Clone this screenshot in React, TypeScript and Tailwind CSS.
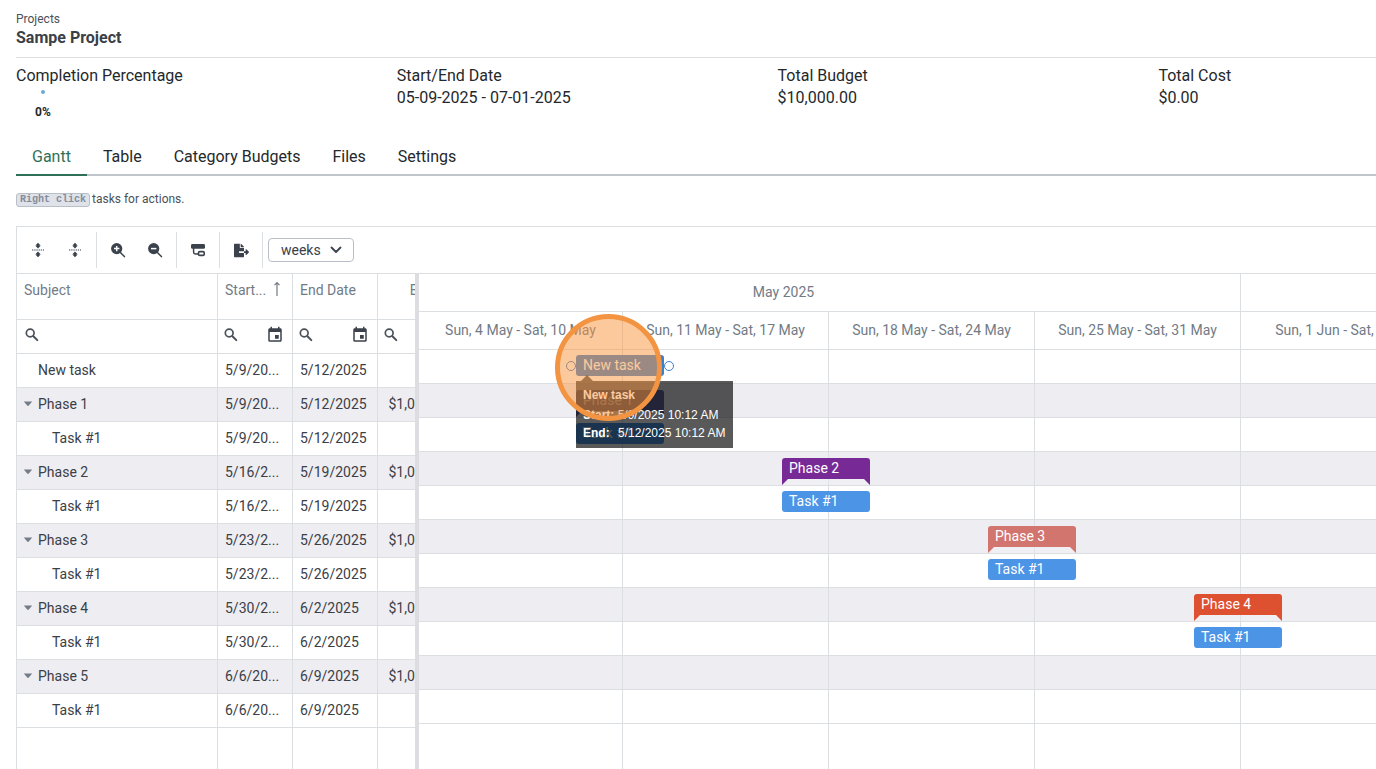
import { useState } from 'react';
import type { ReactNode } from 'react';
import clsx from 'clsx';
import { FaFileExport } from 'react-icons/fa';
import { MdEvent } from 'react-icons/md';

type Row = {
  id: string;
  name: string;
  level: number;
  isPhase?: boolean;
  start: string;
  end: string;
  budget?: string;
  week: number;
  color: string;
};

const TASK_COLOR = 'bg-[#4b94e6]';
const WEEK_WIDTH = 206;
const FIRST_BAR_LEFT = 157;

const rows: Row[] = [
  { id: '0', name: 'New task', level: 1, start: '5/9/20...', end: '5/12/2025', week: 0, color: 'bg-[#3c7fcd]' },
  { id: '1', name: 'Phase 1', level: 1, isPhase: true, start: '5/9/20...', end: '5/12/2025', budget: '$1,000.00', week: 0, color: 'bg-[#66689f] text-[#66689f]' },
  { id: '1.1', name: 'Task #1', level: 2, start: '5/9/20...', end: '5/12/2025', week: 0, color: TASK_COLOR },
  { id: '2', name: 'Phase 2', level: 1, isPhase: true, start: '5/16/2...', end: '5/19/2025', budget: '$1,000.00', week: 1, color: 'bg-[#772a96] text-[#772a96]' },
  { id: '2.1', name: 'Task #1', level: 2, start: '5/16/2...', end: '5/19/2025', week: 1, color: TASK_COLOR },
  { id: '3', name: 'Phase 3', level: 1, isPhase: true, start: '5/23/2...', end: '5/26/2025', budget: '$1,000.00', week: 2, color: 'bg-[#d2756f] text-[#d2756f]' },
  { id: '3.1', name: 'Task #1', level: 2, start: '5/23/2...', end: '5/26/2025', week: 2, color: TASK_COLOR },
  { id: '4', name: 'Phase 4', level: 1, isPhase: true, start: '5/30/2...', end: '6/2/2025', budget: '$1,000.00', week: 3, color: 'bg-[#dd5030] text-[#dd5030]' },
  { id: '4.1', name: 'Task #1', level: 2, start: '5/30/2...', end: '6/2/2025', week: 3, color: TASK_COLOR },
  { id: '5', name: 'Phase 5', level: 1, isPhase: true, start: '6/6/20...', end: '6/9/2025', budget: '$1,000.00', week: 4, color: 'bg-[#2f9e6b] text-[#2f9e6b]' },
  { id: '5.1', name: 'Task #1', level: 2, start: '6/6/20...', end: '6/9/2025', week: 4, color: TASK_COLOR },
];

const weeks = [
  'Sun, 4 May - Sat, 10 May',
  'Sun, 11 May - Sat, 17 May',
  'Sun, 18 May - Sat, 24 May',
  'Sun, 25 May - Sat, 31 May',
  'Sun, 1 Jun - Sat, 7 Jun',
];

const tabs = ['Gantt', 'Table', 'Category Budgets', 'Files', 'Settings'];

const WEEK_GRID = 'grid grid-cols-[204px_206px_206px_206px_206px]';

function ToolButton({ label, children }: { label: string; children: ReactNode }) {
  return (
    <button type="button" aria-label={label} className="flex h-9 w-9 items-center justify-center text-[#3b424c]">
      {children}
    </button>
  );
}

function ToolGroup({ children }: { children: ReactNode }) {
  return <div className="flex gap-px border-r border-[#dcdfe2] px-[3px]">{children}</div>;
}

function RowsIcon() {
  return (
    <svg width="16" height="16" viewBox="0 0 16 16" fill="currentColor">
      <path d="M8 .8l2.6 2.6H9v.4h1.6L8 6.4 5.400 3.8H7v-.4H5.400z" />
      <path d="M8 9.600l2.6 2.6H9v.4h1.6L8 15.200l-2.6-2.6H7v-.4H5.400z" />
      <path d="M2 7.500h1.300v1H2zM4.200 7.500h1.300v1H4.200zM6.400 7.500h1.300v1H6.400zM8.600 7.500h1.300v1H8.600zM10.800 7.500h1.300v1h-1.300zM13 7.500h1v1h-1z" />
    </svg>
  );
}

function ZoomIcon({ plus }: { plus?: boolean }) {
  return (
    <svg width="16" height="16" viewBox="0 0 16 16" fill="none">
      <circle cx="6.7" cy="6.6" r="5.6" fill="currentColor" />
      <path d="M10.4 10.4l4 4.2" stroke="currentColor" strokeWidth="1.5" strokeLinecap="round" />
      <path d={plus ? 'M4 6.6h5.4M6.7 3.9v5.4' : 'M4 6.6h5.4'} stroke="#fff" strokeWidth="1.5" />
    </svg>
  );
}

function SubtaskIcon() {
  return (
    <svg width="16" height="16" viewBox="0 0 16 16" fill="none" stroke="currentColor">
      <rect x="1" y="2" width="14" height="4.8" rx="1.4" fill="currentColor" stroke="none" />
      <path d="M3.6 6v4.2c0 1 .6 1.7 1.7 1.7h3" strokeWidth="1.5" />
      <rect x="8.5" y="9.6" width="5.7" height="3.8" rx="1.2" strokeWidth="1.6" />
    </svg>
  );
}

function SearchIcon() {
  return (
    <svg width="16" height="16" viewBox="0 0 16 16" fill="none" stroke="currentColor" strokeLinecap="round">
      <circle cx="6.2" cy="6" r="3.9" strokeWidth="1.7" />
      <path d="M9.400 9.200l3.900 3.900" strokeWidth="2" />
    </svg>
  );
}

function FilterCell({ id, label, date }: { id: string; label: string; date?: boolean }) {
  return (
    <div className="flex h-[29px] items-center text-[#4a5159]">
      <label htmlFor={id} aria-label={label} className="shrink-0">
        <SearchIcon />
      </label>
      <input id={id} type="text" className="w-0 min-w-0 flex-1 outline-none" />
      {date && (
        <button type="button" aria-label={`Pick ${label}`} className="shrink-0 text-[#3b424c]">
          <MdEvent size={18} />
        </button>
      )}
    </div>
  );
}

function TreeList() {
  return (
    <div className="flex w-[398px] shrink-0 flex-col overflow-hidden">
      <table className="w-[441px] table-fixed border-separate border-spacing-0 text-sm leading-5 text-[#3b4047]">
        <colgroup>
          <col className="w-[201px]" />
          <col className="w-[75px]" />
          <col className="w-[85px]" />
          <col className="w-[80px]" />
        </colgroup>
        <thead>
          <tr className="h-[46px] align-top text-left text-[#727b85] [&>th]:border-r [&>th]:border-b [&>th]:border-[#dcdfe2] [&>th]:pt-[6px] [&>th]:pl-[7px] [&>th]:font-normal">
            <th>Subject</th>
            <th>
              <div className="flex items-start justify-between">
                Start...
                <svg width="8" height="16" viewBox="0 0 8 16" className="mr-[11px] mt-px" fill="none" stroke="currentColor" strokeWidth="1.2">
                  <path d="M4 15V2M1.5 4.2L4 1.6l2.5 2.6" />
                </svg>
              </div>
            </th>
            <th>End Date</th>
            <th className="pr-[3px] text-right">Budget</th>
          </tr>
          <tr className="h-[34px] [&>td]:border-r [&>td]:border-b [&>td]:border-[#dcdfe2] [&>td]:pr-2 [&>td]:pb-[3px] [&>td]:pl-[5px] [&>td:first-child]:pl-[7px]">
            <td>
              <FilterCell id="filter-subject" label="Subject" />
            </td>
            <td>
              <FilterCell id="filter-start" label="Start Date" date />
            </td>
            <td>
              <FilterCell id="filter-end" label="End Date" date />
            </td>
            <td>
              <FilterCell id="filter-budget" label="Budget" />
            </td>
          </tr>
        </thead>
        <tbody>
          {rows.map((row) => (
            <tr
              key={row.id}
              className={clsx(
                'h-[34px] [&>td]:border-r [&>td]:border-b [&>td]:border-[#dcdfe2] [&>td]:px-[7px] [&>td]:pb-[2px]',
                row.isPhase && 'bg-[#eeedf2]',
              )}
            >
              <td>
                <div className={clsx('flex items-center', row.level === 2 ? 'pl-7' : !row.isPhase && 'pl-[14px]')}>
                  {row.isPhase && (
                    <button type="button" aria-label={`Collapse ${row.name}`} className="w-[14px]">
                      <svg width="8" height="5" viewBox="0 0 8 5" fill="#747d87">
                        <path d="M.4.4h7.2c.4 0 .5.4.2.7L4.8 4.5c-.5.5-1.1.5-1.6 0L.2 1.1C-.1.8 0 .4.4.4z" />
                      </svg>
                    </button>
                  )}
                  {row.name}
                </div>
              </td>
              <td>{row.start}</td>
              <td>{row.end}</td>
              <td className="text-right">{row.budget}</td>
            </tr>
          ))}
        </tbody>
      </table>
      <div className="grid min-h-0 w-[441px] flex-1 grid-cols-[201px_75px_85px_80px] [&>div]:border-r [&>div]:border-[#dcdfe2]">
        <div />
        <div />
        <div />
        <div />
      </div>
    </div>
  );
}

function TaskBar({ row }: { row: Row }) {
  const left = FIRST_BAR_LEFT + row.week * WEEK_WIDTH;
  if (row.isPhase) {
    return (
      <div className={clsx('absolute top-[6px] h-[21px] w-[88px] rounded-t-[3px] px-[7px] text-sm leading-5', row.color)} style={{ left }}>
        <span className="text-white">{row.name}</span>
        <svg className="absolute top-full left-0" width="88" height="6" viewBox="0 0 88 6">
          <path d="M0 0h88v6H0z" fill="#fff" fillOpacity=".15" />
          <path d="M0 0h6L0 6zM88 0h-6l6 6z" fill="currentColor" />
        </svg>
      </div>
    );
  }
  return (
    <div className={clsx('absolute top-[5px] h-[21px] w-[88px] rounded-[3px] px-[7px] text-sm leading-5 text-white', row.color)} style={{ left }}>
      {row.name}
    </div>
  );
}

function TaskTooltip() {
  return (
    <div
      role="tooltip"
      className="absolute top-[31px] left-[157px] z-10 w-[157px] bg-black/65 px-[7px] pt-[5px] pb-[6px] font-['Liberation_Sans',Arial,sans-serif] text-xs whitespace-nowrap text-white"
    >
      <div className="absolute -top-[6px] left-[5px] border-x-6 border-b-6 border-x-transparent border-b-black/65" />
      <div className="leading-[18px] font-bold">New task</div>
      <div className="mt-[2px] leading-[18px]">
        <b>Start:</b> 5/9/2025 10:12 AM
      </div>
      <div className="leading-[18px]">
        <b className="mr-[5px]">End:</b> 5/12/2025 10:12 AM
      </div>
    </div>
  );
}

function Timeline() {
  return (
    <div className="flex min-w-0 flex-1 flex-col overflow-hidden text-sm text-[#727b85]">
      <div className="grid h-[38px] shrink-0 grid-cols-[822px_206px] border-b border-[#dcdfe2]">
        <div className="flex items-center justify-center border-r border-[#dcdfe2] pr-[92px] pb-[2px]">May 2025</div>
        <div />
      </div>
      <div className={clsx(WEEK_GRID, 'h-[38px] shrink-0')}>
        {weeks.map((week) => (
          <div key={week} className="flex items-center justify-center border-r border-b border-[#dcdfe2] pb-[2px] whitespace-nowrap">
            {week}
          </div>
        ))}
      </div>
      {rows.map((row, i) => (
        <div key={row.id} className={clsx(WEEK_GRID, 'relative h-[34px] shrink-0', row.isPhase && 'bg-[#eeedf2]')}>
          {weeks.map((week) => (
            <div key={week} className="border-r border-b border-[#dcdfe2]" />
          ))}
          <TaskBar row={row} />
          {i === 0 && (
            <>
              <div className="absolute top-[11px] left-[147px] size-[10px] rounded-full border border-[#3c7fcd]" />
              <div className="absolute top-[11px] left-[245px] size-[10px] rounded-full border border-[#3c7fcd] bg-white" />
              <TaskTooltip />
              {/* click highlight */}
              <div className="absolute -top-9 left-[136px] z-20 size-[107px] rounded-full border-[5px] border-[#f29441] bg-[#fa943c]/50" />
            </>
          )}
        </div>
      ))}
      <div className={clsx(WEEK_GRID, 'min-h-0 flex-1')}>
        {weeks.map((week) => (
          <div key={week} className="border-r border-[#dcdfe2]" />
        ))}
      </div>
    </div>
  );
}

export default function App() {
  const [tab, setTab] = useState('Gantt');
  const [scale, setScale] = useState('weeks');

  return (
    <div className="flex h-screen flex-col overflow-hidden bg-white pl-4 font-[Roboto,sans-serif] text-base text-[#24282c]">
      <header className="border-b border-[#dcdfe2] pt-[11px] pb-2 text-[#3b4047]">
        <a href="#projects" className="block text-xs leading-4 text-[#4a5159]">
          Projects
        </a>
        <h1 className="leading-[22px] font-bold">Sampe Project</h1>
      </header>

      <section className="grid grid-cols-[repeat(4,28%)] pt-[7px] pb-[17px] leading-[22px]">
        <div>
          <div>Completion Percentage</div>
          <div className="flex w-[54px] flex-col items-center gap-[10px] pt-[3px]">
            <svg width="4" height="4" viewBox="0 0 4 4">
              <circle cx="2" cy="2" r="2" fill="#6ba9d3" />
            </svg>
            <span className="text-xs leading-4 font-bold">0%</span>
          </div>
        </div>
        <div>
          <div>Start/End Date</div>
          <div>05-09-2025 - 07-01-2025</div>
        </div>
        <div>
          <div>Total Budget</div>
          <div>$10,000.00</div>
        </div>
        <div>
          <div>Total Cost</div>
          <div>$0.00</div>
        </div>
      </section>

      <nav role="tablist" className="mt-px flex h-[38px] shrink-0 shadow-[inset_0_-2px_0_#c0c4cb]">
        {tabs.map((item) => (
          <button
            key={item}
            type="button"
            role="tab"
            aria-selected={tab === item}
            onClick={() => setTab(item)}
            className={clsx('border-b-2 px-4 pt-[2px]', tab === item ? 'border-[#2f7158] text-[#2f7158]' : 'border-transparent')}
          >
            {item}
          </button>
        ))}
      </nav>

      <p className="mt-[15px] flex items-center gap-[2px] text-xs leading-4 text-[#4a5159]">
        <kbd className="mt-[2px] rounded-[3px] border border-[#b9bfc8] bg-[#dfe2e8] px-[3px] font-['Liberation_Mono',monospace] text-[10px] leading-3 font-bold text-[#848c9c]">
          Right click
        </kbd>
        tasks for actions.
      </p>

      <main className="mt-[19px] flex min-h-0 flex-1 flex-col border-t border-l border-[#dcdfe2]">
        <div className="flex h-[47px] shrink-0 items-center border-b border-[#dcdfe2]">
          <ToolGroup>
            <ToolButton label="Expand all">
              <RowsIcon />
            </ToolButton>
            <ToolButton label="Collapse all">
              <RowsIcon />
            </ToolButton>
          </ToolGroup>
          <ToolGroup>
            <ToolButton label="Zoom in">
              <ZoomIcon plus />
            </ToolButton>
            <ToolButton label="Zoom out">
              <ZoomIcon />
            </ToolButton>
          </ToolGroup>
          <ToolGroup>
            <ToolButton label="Show dependencies">
              <SubtaskIcon />
            </ToolButton>
          </ToolGroup>
          <ToolGroup>
            <ToolButton label="Export">
              <FaFileExport size={15} />
            </ToolButton>
          </ToolGroup>
          <div className="relative ml-[5px]">
            <select
              aria-label="Scale"
              value={scale}
              onChange={(e) => setScale(e.target.value)}
              className="h-6 w-[86px] appearance-none rounded border border-[#b9bfc8] bg-white pl-3 text-sm leading-5 text-[#3b4047]"
            >
              <option value="days">days</option>
              <option value="weeks">weeks</option>
              <option value="months">months</option>
            </select>
            <svg className="pointer-events-none absolute top-2 right-3" width="12" height="8" viewBox="0 0 12 8" fill="none" stroke="#3b424c" strokeWidth="1.8" strokeLinecap="round" strokeLinejoin="round">
              <path d="M1.5 1.5L6 6l4.5-4.5" />
            </svg>
          </div>
        </div>

        <div className="flex min-h-0 flex-1">
          <TreeList />
          <div className="w-1 shrink-0 bg-[#dcdce1]" />
          <Timeline />
        </div>
      </main>
    </div>
  );
}
